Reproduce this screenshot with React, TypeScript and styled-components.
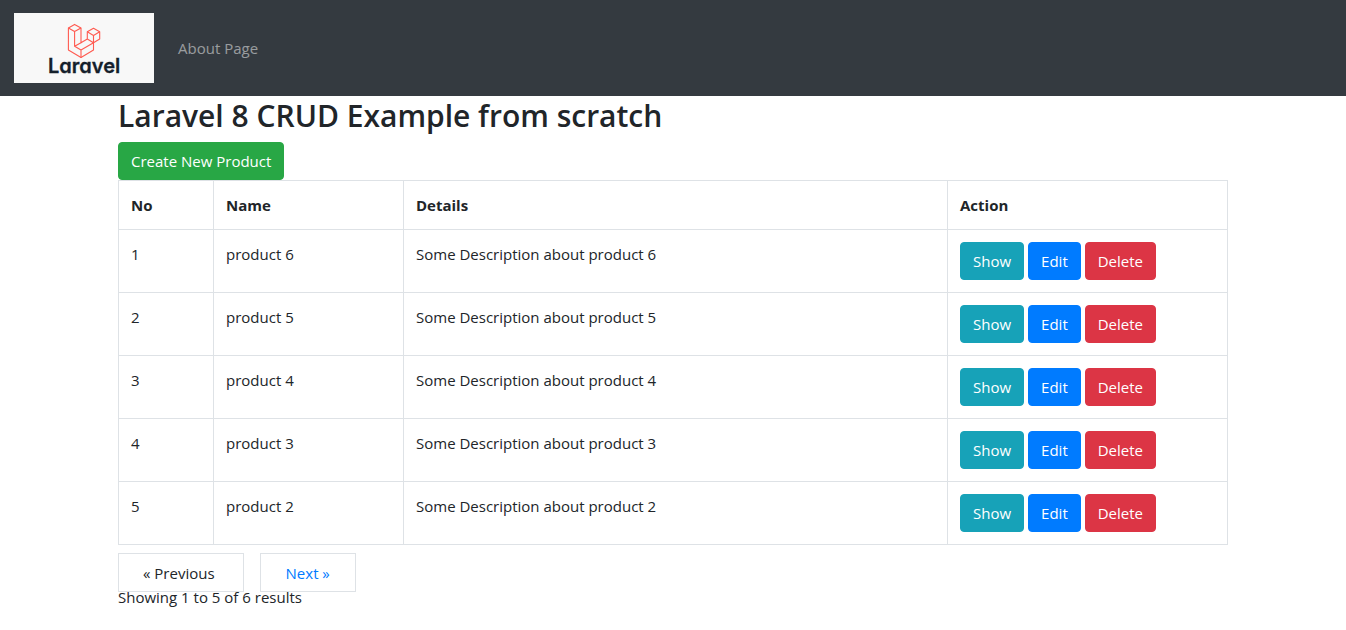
import React from 'react';
import styled, { createGlobalStyle } from 'styled-components';

const GlobalStyle = createGlobalStyle`
  *, *::before, *::after { box-sizing: border-box; }
  body {
    margin: 0;
    background: #fff;
    color: #212529;
    font-family: "Segoe UI", "Open Sans", "Noto Sans", sans-serif;
    font-size: 15px;
    line-height: 24px;
  }
`;

const Navbar = styled.nav`
  display: flex;
  align-items: center;
  gap: 24px;
  padding: 13px 14px;
  background: #343a40;
`;

const Brand = styled.a`
  display: block;
  background: #f8f8f8;
`;

const LogoSvg = styled.svg`
  display: block;
  width: 140px;
  height: 70px;
`;

const Wordmark = styled.text`
  font-family: Inter, sans-serif;
  font-feature-settings: "cv11";
  font-size: 20px;
  font-weight: 600;
  fill: #14202b;
  stroke: #14202b;
  stroke-width: 0.3px;
`;

const NavLink = styled.a`
  color: rgba(255, 255, 255, 0.5);
  text-decoration: none;
`;

const Container = styled.main`
  max-width: 1140px;
  margin: 0 auto;
  padding: 0 15px;
`;

const Title = styled.h2`
  margin: 0 0 6px;
  font-size: 30px;
  font-weight: 600;
  line-height: 40px;
`;

const colors = {
  success: '#28a745',
  info: '#17a2b8',
  primary: '#007bff',
  danger: '#dc3545',
};

const Button = styled.button<{ $tone: keyof typeof colors }>`
  display: inline-block;
  padding: 6px 12px;
  border: 1px solid ${({ $tone }) => colors[$tone]};
  border-radius: 4px;
  background: ${({ $tone }) => colors[$tone]};
  color: #fff;
  font: inherit;
  text-decoration: none;
  vertical-align: middle;
  cursor: pointer;
`;

const Toolbar = styled.div`
  display: flex;
`;

const Table = styled.table`
  width: 100%;
  margin-bottom: 8px;
  border: 1px solid #dee2e6;
  border-collapse: collapse;
  table-layout: fixed;
`;

const Column = styled.col<{ $width?: number }>`
  width: ${({ $width }) => ($width ? `${$width}px` : 'auto')};
`;

const HeadCell = styled.th`
  padding: 12px;
  border: 1px solid #dee2e6;
  font-weight: 700;
  text-align: left;
`;

const Cell = styled.td`
  padding: 12px;
  border: 1px solid #dee2e6;
  vertical-align: top;
`;

const Actions = styled.form`
  display: flex;
  gap: 4px;
`;

const Pager = styled.nav`
  display: flex;
  align-items: flex-start;
  gap: 16px;
  height: 32px;
`;

const PageItem = styled.a<{ $disabled?: boolean }>`
  padding: ${({ $disabled }) => ($disabled ? '7px 28px 6px 24px' : '7px 25px 6px')};
  border: 1px solid #dee2e6;
  color: ${({ $disabled }) => ($disabled ? 'inherit' : '#007bff')};
  text-decoration: none;
`;

const Summary = styled.p`
  margin: 0;
`;

const products = [6, 5, 4, 3, 2];

function Logo() {
  return (
    <LogoSvg viewBox="0 0 140 70" role="img" aria-label="Laravel logo">
      <g fill="none" stroke="#ff5a50" strokeWidth="1.1" strokeLinejoin="round">
        <path d="M60.6 11.4 54.4 15v22L67 44.5 79.5 37v-7.3L85.7 26v-7.2l-6.2-3.5-6.2 3.5V26L67 29.7V15Z" />
        <path d="M54.4 15l6.2 3.5L67 15M60.6 18.5v14.8L67 37v7.5M60.6 33.3 67 29.7M67 37l12.5-7.3L73.3 26M73.3 18.8l6.2 3.6 6.2-3.6M79.5 22.4v7.3" />
      </g>
      <Wordmark x="34" y="60">Laravel</Wordmark>
    </LogoSvg>
  );
}

export default function App() {
  return (
    <>
      <GlobalStyle />
      <Navbar>
        <Brand href="#"><Logo /></Brand>
        <NavLink href="#about">About Page</NavLink>
      </Navbar>
      <Container>
        <Title>Laravel 8 CRUD Example from scratch</Title>
        <Toolbar>
          <Button as="a" href="#create" $tone="success">Create New Product</Button>
        </Toolbar>
        <Table>
          <colgroup>
            <Column $width={95} />
            <Column $width={190} />
            <Column />
            <Column $width={280} />
          </colgroup>
          <thead>
            <tr>
              <HeadCell scope="col">No</HeadCell>
              <HeadCell scope="col">Name</HeadCell>
              <HeadCell scope="col">Details</HeadCell>
              <HeadCell scope="col">Action</HeadCell>
            </tr>
          </thead>
          <tbody>
            {products.map((id, index) => (
              <tr key={id}>
                <Cell>{index + 1}</Cell>
                <Cell>product {id}</Cell>
                <Cell>Some Description about product {id}</Cell>
                <Cell>
                  <Actions onSubmit={(event) => event.preventDefault()}>
                    <Button as="a" href={`#show-${id}`} $tone="info">Show</Button>
                    <Button as="a" href={`#edit-${id}`} $tone="primary">Edit</Button>
                    <Button type="submit" $tone="danger">Delete</Button>
                  </Actions>
                </Cell>
              </tr>
            ))}
          </tbody>
        </Table>
        <Pager aria-label="Pagination">
          <PageItem as="span" $disabled>« Previous</PageItem>
          <PageItem href="#page-2">Next »</PageItem>
        </Pager>
        <Summary>Showing 1 to 5 of 6 results</Summary>
      </Container>
    </>
  );
}
